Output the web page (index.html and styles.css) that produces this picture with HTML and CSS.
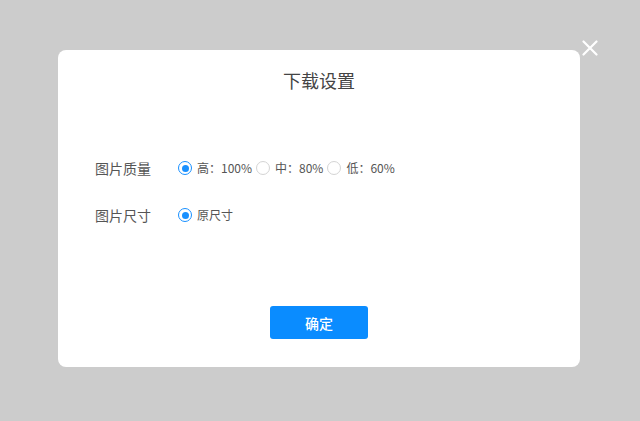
FILE: index.html
```html
<!DOCTYPE html>
<html lang="zh">
<head>
<meta charset="utf-8">
<link rel="stylesheet" href="styles.css">
</head>
<body>
<div class="overlay">
  <div class="modal">
    <h1 class="title">下载设置</h1>
    <div class="form">
      <div class="row">
        <div class="label">图片质量</div>
        <div class="options">
          <label class="opt"><span class="radio checked"></span><span>高：100%</span></label>
          <label class="opt"><span class="radio"></span><span>中：80%</span></label>
          <label class="opt"><span class="radio"></span><span>低：60%</span></label>
        </div>
      </div>
      <div class="row">
        <div class="label">图片尺寸</div>
        <div class="options">
          <label class="opt"><span class="radio checked"></span><span>原尺寸</span></label>
        </div>
      </div>
    </div>
    <div class="actions">
      <button class="btn">确定</button>
    </div>
  </div>
  <div class="close" aria-label="关闭">
    <svg width="16" height="16" viewBox="0 0 16 16"><path d="M1.5 1.5L14.5 14.5M14.5 1.5L1.5 14.5" stroke="#fff" stroke-width="2.2" stroke-linecap="round"/></svg>
  </div>
</div>
</body>
</html>
```

FILE: styles.css
```css
html, body {
  margin: 0;
  padding: 0;
  height: 100%;
}
body {
  background: #cccccc;
  font-family: "Noto Sans CJK SC", "Noto Sans", sans-serif;
}
.overlay {
  position: relative;
  width: 640px;
  height: 421px;
  padding: 50px 0 0 58px;
  box-sizing: border-box;
}
.modal {
  width: 522px;
  height: 317px;
  background: #fff;
  border-radius: 8px;
  box-sizing: border-box;
  display: flex;
  flex-direction: column;
  padding: 18px 0 0 0;
}
.title {
  margin: 0;
  font-size: 18px;
  font-weight: normal;
  line-height: 24px;
  color: #444;
  text-align: center;
}
.form {
  margin-top: 66px;
  padding-left: 37px;
  display: flex;
  flex-direction: column;
  gap: 27px;
}
.row {
  display: flex;
  align-items: center;
  height: 20px;
}
.label {
  width: 83px;
  font-size: 14px;
  color: #555;
  line-height: 20px;
}
.options {
  display: flex;
  align-items: center;
  gap: 4px;
}
.opt {
  display: flex;
  align-items: center;
  gap: 5px;
  font-size: 12px;
  color: #555;
  line-height: 20px;
}
.radio {
  width: 14px;
  height: 14px;
  box-sizing: border-box;
  border: 1px solid #d4d4d4;
  border-radius: 50%;
  background: #fff;
  display: flex;
  align-items: center;
  justify-content: center;
}
.radio.checked {
  border-color: #1890ff;
}
.radio.checked::after {
  content: "";
  width: 7px;
  height: 7px;
  border-radius: 50%;
  background: #1890ff;
}
.actions {
  margin-top: 81px;
  display: flex;
  justify-content: center;
}
.btn {
  width: 98px;
  height: 33px;
  border: none;
  border-radius: 3px;
  background: #0a8cff;
  color: #fff;
  font-family: "Noto Sans CJK SC", sans-serif;
  font-size: 14px;
  font-weight: 500;
  padding: 0;
}
.close {
  position: absolute;
  left: 582px;
  top: 40px;
  width: 16px;
  height: 16px;
}
.close svg {
  display: block;
}
```
